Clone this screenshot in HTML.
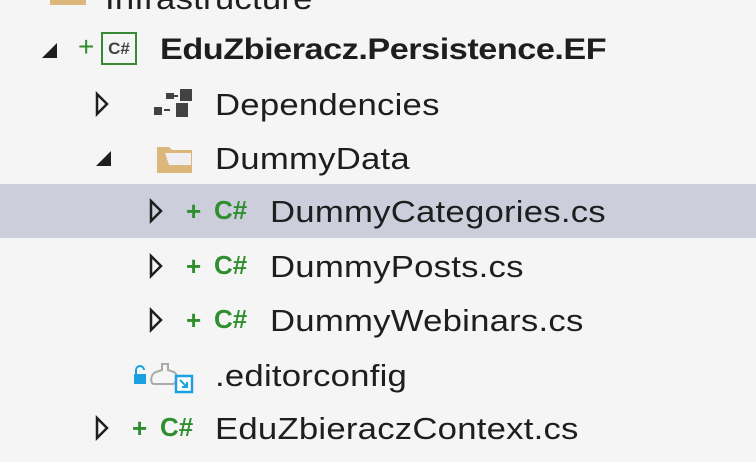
<!DOCTYPE html><html><head><style>
body{margin:0;width:756px;height:462px;background:#f5f5f5;overflow:hidden;position:relative;font-family:"Liberation Sans",sans-serif;color:#1e1e1e}
.r{position:absolute;left:0;width:756px;height:54px}
.t{position:absolute;top:10px;font-size:31px;letter-spacing:0.2px;white-space:nowrap;transform:scaleX(1.12);transform-origin:left}
.hl{background:#cccedb}
.g{position:absolute;color:#2f8f2f;font-weight:bold}
svg{position:absolute}
</style></head><body>
<div class="r" style="top:-29px">
<svg style="left:48px;top:14px" width="40" height="22"><path d="M2 2h12l4 4h20v14H2z" fill="#dcb67a"/></svg>
<div class="t" style="left:105px;color:#1e1e1e">Infrastructure</div></div>
<div class="r" style="top:23px">
<svg style="left:40px;top:18px" width="20" height="20"><path d="M17 2V17H2z" fill="#1e1e1e"/></svg>
<div class="g" style="left:78px;top:8px;font-size:28px;font-weight:normal">+</div>
<div style="position:absolute;left:101px;top:9px;width:38px;width:36px;height:33px;border:2px solid #388a34;box-sizing:border-box;font-size:17px;text-align:center;line-height:29px;color:#424242;font-weight:bold">C#</div>
<div class="t" style="left:160px;font-weight:bold;font-size:30px;letter-spacing:-0.4px;transform:scaleX(1.14)">EduZbieracz.Persistence.EF</div></div>
<div class="r" style="top:77px">
<svg style="left:94px;top:14px" width="16" height="26"><path d="M3 3L13 13L3 23Z" fill="none" stroke="#1e1e1e" stroke-width="2.5"/></svg>
<svg style="left:152px;top:12px" width="46" height="32"><g fill="#424242"><rect x="2" y="18" width="8" height="8"/><rect x="14" y="4" width="8" height="6"/><rect x="28" y="0" width="12" height="12"/><rect x="24" y="14" width="12" height="14"/><rect x="12" y="20" width="6" height="2"/><rect x="22" y="6" width="4" height="2"/></g></svg>
<div class="t" style="left:215px">Dependencies</div></div>
<div class="r" style="top:131px">
<svg style="left:94px;top:18px" width="20" height="20"><path d="M17 2V17H2z" fill="#1e1e1e"/></svg>
<svg style="left:155px;top:10px" width="44" height="34"><path d="M2 6h12l3 3h20v23H2z" fill="#dcb67a"/><path d="M10 12h26v12H14z" fill="#f0eff1"/></svg>
<div class="t" style="left:215px">DummyData</div></div>
<div class="r hl" style="top:184px">
<svg style="left:148px;top:14px" width="16" height="26"><path d="M3 3L13 13L3 23Z" fill="none" stroke="#1e1e1e" stroke-width="2.5"/></svg>
<div class="g" style="left:186px;top:12px;font-size:26px">+</div><div class="g" style="left:214px;top:11px;font-size:26px">C#</div>
<div class="t" style="left:270px">DummyCategories.cs</div></div>
<div class="r" style="top:239px">
<svg style="left:148px;top:14px" width="16" height="26"><path d="M3 3L13 13L3 23Z" fill="none" stroke="#1e1e1e" stroke-width="2.5"/></svg>
<div class="g" style="left:186px;top:12px;font-size:26px">+</div><div class="g" style="left:214px;top:11px;font-size:26px">C#</div>
<div class="t" style="left:270px">DummyPosts.cs</div></div>
<div class="r" style="top:293px">
<svg style="left:148px;top:14px" width="16" height="26"><path d="M3 3L13 13L3 23Z" fill="none" stroke="#1e1e1e" stroke-width="2.5"/></svg>
<div class="g" style="left:186px;top:12px;font-size:26px">+</div><div class="g" style="left:214px;top:11px;font-size:26px">C#</div>
<div class="t" style="left:270px">DummyWebinars.cs</div></div>
<div class="r" style="top:348px">
<svg style="left:132px;top:10px" width="70" height="36"><rect x="2" y="16" width="12" height="10" fill="#1ba1e2"/><path d="M4 16v-4a4 4 0 0 1 8 0" fill="none" stroke="#1ba1e2" stroke-width="2"/><path d="M22 26c-4 0-4-10 2-12l6-2v-6h6v6l6 2c4 2 4 12-2 12z" fill="none" stroke="#aaa" stroke-width="2"/><rect x="44" y="18" width="16" height="16" fill="#fff" stroke="#1ba1e2" stroke-width="2.5"/><path d="M48 22l7 7M50 29h5v-5" stroke="#1ba1e2" stroke-width="2" fill="none"/></svg>
<div class="t" style="left:215px">.editorconfig</div></div>
<div class="r" style="top:401px">
<svg style="left:94px;top:14px" width="16" height="26"><path d="M3 3L13 13L3 23Z" fill="none" stroke="#1e1e1e" stroke-width="2.5"/></svg>
<div class="g" style="left:132px;top:12px;font-size:26px">+</div><div class="g" style="left:160px;top:11px;font-size:26px">C#</div>
<div class="t" style="left:215px">EduZbieraczContext.cs</div></div>
</body></html>
